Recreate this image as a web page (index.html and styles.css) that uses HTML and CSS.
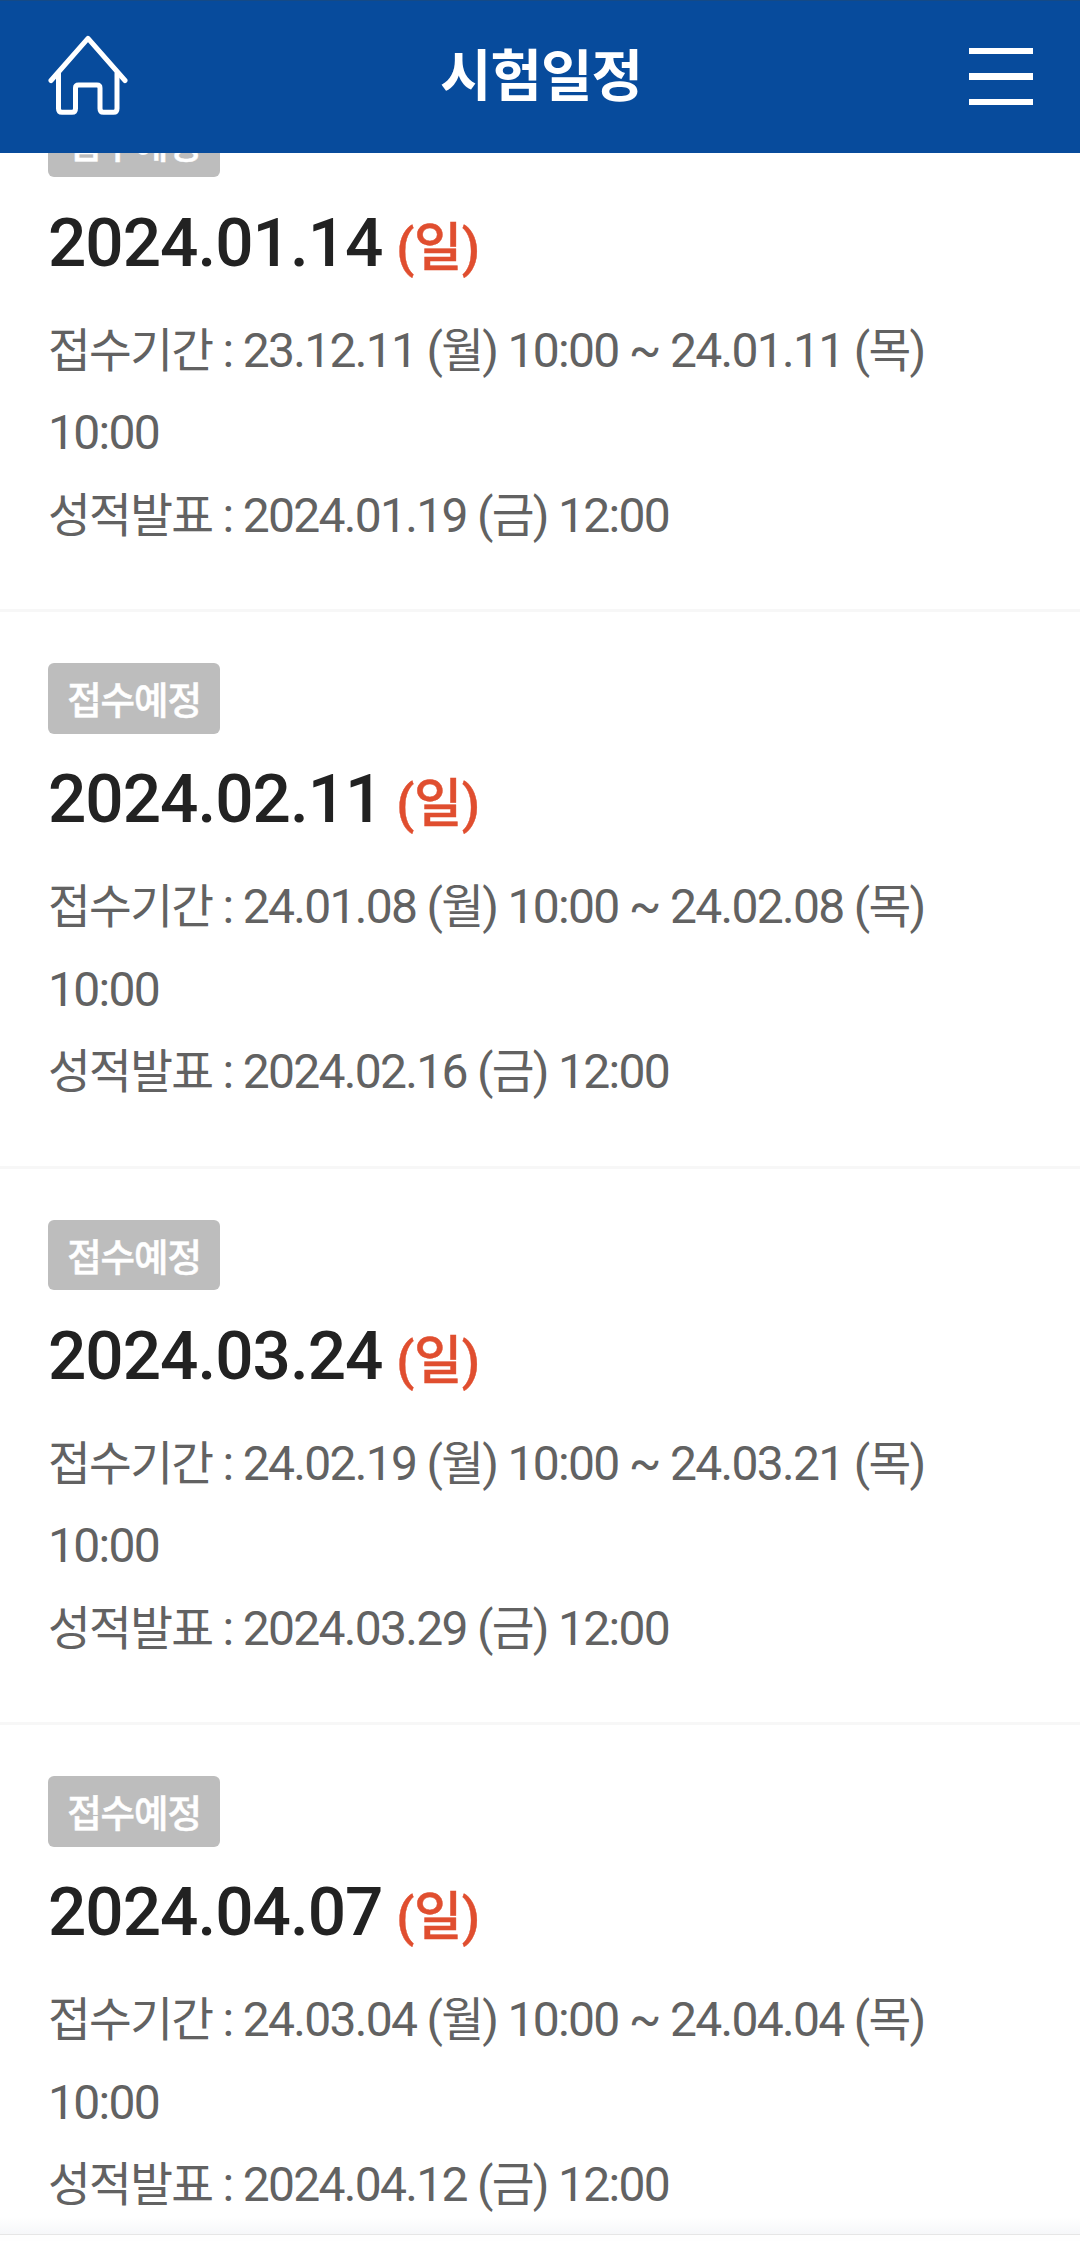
FILE: index.html
```html
<!DOCTYPE html>
<html lang="ko">
<head>
<meta charset="utf-8">
<title>시험일정</title>
<link rel="stylesheet" href="styles.css">
</head>
<body>
<header class="header">
  <svg class="home" width="80" height="82" viewBox="0 0 80 82" fill="none" stroke="#fff" stroke-width="5" stroke-linecap="round" stroke-linejoin="round"><path d="M3 45.500 40 3.300 77 45.500"/><path d="M10.500 38.500V73.500Q10.500 77.300 14 77.300H24Q27.500 77.300 27.500 73.500V53Q27.500 50 30.500 50H49Q52 50 52 53V73.500Q52 77.300 55.500 77.300H65.500Q69 77.300 69 73.500V38.500"/></svg>
  <h1 class="title">시험일정</h1>
  <div class="menu"><span class="bar"></span><span class="bar"></span><span class="bar"></span></div>
</header>
<main class="list">
  <section class="card">
    <span class="badge">접수예정</span>
    <h2 class="date">2024.01.14 <span class="day">(일)</span></h2>
    <p class="info"><span class="ko">접수기간</span> : 23.12.11 (<span class="ko">월</span>) 10:00 ~ 24.01.11 (<span class="ko">목</span>) 10:00</p>
    <p class="info"><span class="ko">성적발표</span> : 2024.01.19 (<span class="ko">금</span>) 12:00</p>
  </section>
  <section class="card">
    <span class="badge">접수예정</span>
    <h2 class="date">2024.02.11 <span class="day">(일)</span></h2>
    <p class="info"><span class="ko">접수기간</span> : 24.01.08 (<span class="ko">월</span>) 10:00 ~ 24.02.08 (<span class="ko">목</span>) 10:00</p>
    <p class="info"><span class="ko">성적발표</span> : 2024.02.16 (<span class="ko">금</span>) 12:00</p>
  </section>
  <section class="card">
    <span class="badge">접수예정</span>
    <h2 class="date">2024.03.24 <span class="day">(일)</span></h2>
    <p class="info"><span class="ko">접수기간</span> : 24.02.19 (<span class="ko">월</span>) 10:00 ~ 24.03.21 (<span class="ko">목</span>) 10:00</p>
    <p class="info"><span class="ko">성적발표</span> : 2024.03.29 (<span class="ko">금</span>) 12:00</p>
  </section>
  <section class="card">
    <span class="badge">접수예정</span>
    <h2 class="date">2024.04.07 <span class="day">(일)</span></h2>
    <p class="info"><span class="ko">접수기간</span> : 24.03.04 (<span class="ko">월</span>) 10:00 ~ 24.04.04 (<span class="ko">목</span>) 10:00</p>
    <p class="info"><span class="ko">성적발표</span> : 2024.04.12 (<span class="ko">금</span>) 12:00</p>
  </section>
</main>
<footer class="bottom-edge"></footer>
</body>
</html>
```
FILE: styles.css
```css
* { box-sizing: border-box; margin: 0; padding: 0; }
body {
  display: flex;
  flex-direction: column;
  height: 2241px;
  overflow: hidden;
  background: #fff;
  font-family: Roboto, "Noto Sans CJK KR", sans-serif;
}
.header {
  position: relative;
  z-index: 1;
  flex: none;
  display: grid;
  grid-template-columns: 80px 1fr 64px;
  align-items: center;
  height: 153px;
  padding: 0 47px 0 48px;
  background: #074b9c;
  border-top: 1px solid #154a86;
  color: #fff;
}
.home { display: block; margin-top: -3px; }
.title {
  padding-right: 15px;
  text-align: center;
  font-size: 56px;
  line-height: 80px;
  font-weight: 700;
  letter-spacing: -1px;
}
.menu { display: flex; flex-direction: column; gap: 19px; margin-top: -1px; }
.bar { height: 6px; background: #fff; }
.bar:nth-child(2) { height: 7px; }
.list {
  flex: 1;
  min-height: 0;
  margin-top: -97.4px;
}
.card {
  height: 556.5px;
  padding: 51px 48px 0;
  border-bottom: 3px solid #f7f7f7;
}
.badge {
  display: block;
  width: 172px;
  height: 70.5px;
  border-radius: 6px;
  background: #bdbdbd;
  color: #fff;
  font-size: 37.5px;
  font-weight: 500;
  line-height: 76px;
  letter-spacing: -1.1px;
  text-align: center;
  -webkit-text-stroke: 0.5px #fff;
}
.date {
  margin-top: 15.5px;
  height: 117px;
  line-height: 100px;
  font-size: 67.5px;
  font-weight: 500;
  letter-spacing: -1px;
  color: #222;
}
.day {
  margin-left: -2px;
  font-size: 52.5px;
  letter-spacing: -0.5px;
  color: #e04e2f;
  -webkit-text-stroke: 0.4px #e04e2f;
}
.info {
  height: 82.5px;
  font-size: 48px;
  line-height: 82.5px;
  letter-spacing: -1.7px;
  color: #626262;
}
.info:nth-of-type(1) { height: 165px; }
.ko { font-size: 46.5px; line-height: 1; }
.bottom-edge {
  position: relative;
  flex: none;
  height: 24px;
  background: linear-gradient(#fff0, #f6f7f9 17px, #e6e6e6 17px, #e6e6e6 18px, #fefefe 18px);
}
```
